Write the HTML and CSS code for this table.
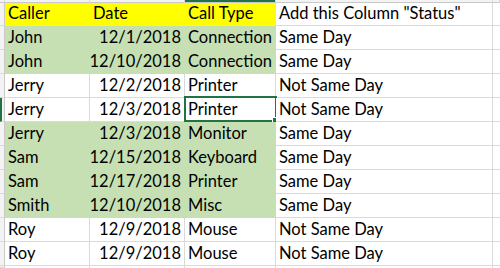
FILE: index.html
```html
<!DOCTYPE html>
<html>
<head>
<meta charset="utf-8">
<link rel="stylesheet" href="styles.css">
</head>
<body>
<div class="sheet">
  <div class="hd corner"></div><div class="hd"></div><div class="hd"></div><div class="hd hd-sel"></div><div class="hd"></div><div class="hd"></div>

  <div class="rh"></div><div class="c yel">Caller</div><div class="c yel">Date</div><div class="c yel">Call Type</div><div class="c">Add this Column "Status"</div><div class="c end"></div>

  <div class="rh"></div><div class="c grn">John</div><div class="c grn num">12/1/2018</div><div class="c grn">Connection</div><div class="c">Same Day</div><div class="c end"></div>
  <div class="rh"></div><div class="c grn">John</div><div class="c grn num">12/10/2018</div><div class="c grn">Connection</div><div class="c">Same Day</div><div class="c end"></div>
  <div class="rh"></div><div class="c">Jerry</div><div class="c num">12/2/2018</div><div class="c">Printer</div><div class="c">Not Same Day</div><div class="c end"></div>
  <div class="rh rh-sel"></div><div class="c">Jerry</div><div class="c num">12/3/2018</div><div class="c sel">Printer<span class="selbox"></span><span class="handle"></span></div><div class="c">Not Same Day</div><div class="c end"></div>
  <div class="rh"></div><div class="c grn">Jerry</div><div class="c grn num">12/3/2018</div><div class="c grn">Monitor</div><div class="c">Same Day</div><div class="c end"></div>
  <div class="rh"></div><div class="c grn">Sam</div><div class="c grn num">12/15/2018</div><div class="c grn">Keyboard</div><div class="c">Same Day</div><div class="c end"></div>
  <div class="rh"></div><div class="c grn">Sam</div><div class="c grn num">12/17/2018</div><div class="c grn">Printer</div><div class="c">Same Day</div><div class="c end"></div>
  <div class="rh"></div><div class="c grn">Smith</div><div class="c grn num">12/10/2018</div><div class="c grn">Misc</div><div class="c">Same Day</div><div class="c end"></div>
  <div class="rh"></div><div class="c">Roy</div><div class="c num">12/9/2018</div><div class="c">Mouse</div><div class="c">Not Same Day</div><div class="c end"></div>
  <div class="rh"></div><div class="c">Roy</div><div class="c num">12/9/2018</div><div class="c">Mouse</div><div class="c">Not Same Day</div><div class="c end"></div>
  <div class="rh"></div><div class="c"></div><div class="c"></div><div class="c"></div><div class="c"></div><div class="c end"></div>
</div>
</body>
</html>
```
FILE: styles.css
```css
html, body {
  margin: 0;
  padding: 0;
  background: #ffffff;
  overflow: hidden;
}
.sheet {
  display: grid;
  grid-template-columns: 5px 85px 95px 91px 217px 7px;
  grid-template-rows: 3px 23px repeat(10, 24px) 2px;
  height: 268px;
  overflow: hidden;
  font-family: Lato, "Open Sans", sans-serif;
  font-size: 16.5px;
  color: #000;
}
.hd {
  box-sizing: border-box;
  background: #f3f3f3;
  border-bottom: 1px solid #c9c9c9;
  border-right: 1px solid #d9d9d9;
}
.hd-sel {
  background: #217346;
  border-bottom: 1px solid #c9c9c9;
}
.rh {
  box-sizing: border-box;
  background: #f3f3f3;
  border-right: 1px solid #c9c9c9;
  border-bottom: 1px solid #d9d9d9;
}
.rh-sel {
  border-left: 2px solid #217346;
}
.c {
  box-sizing: border-box;
  position: relative;
  display: flex;
  align-items: flex-end;
  padding: 0 3px 3px 3px;
  line-height: 18px;
  white-space: nowrap;
  border-right: 1px solid #dadada;
  border-bottom: 1px solid #dadada;
  background: #ffffff;
}
.c.end {
  border-right: none;
}
.num {
  justify-content: flex-end;
}
.yel {
  background: #ffff00;
  border-color: #ffff00;
}
.grn {
  background: #c6e0b4;
  border-color: #c6e0b4;
}
.selbox {
  position: absolute;
  top: -2px;
  left: -1px;
  right: -2px;
  bottom: -1px;
  border: 2px solid #217346;
}
.handle {
  position: absolute;
  right: -4px;
  bottom: -3px;
  width: 5px;
  height: 5px;
  background: #217346;
  border: 1px solid #ffffff;
}
```
